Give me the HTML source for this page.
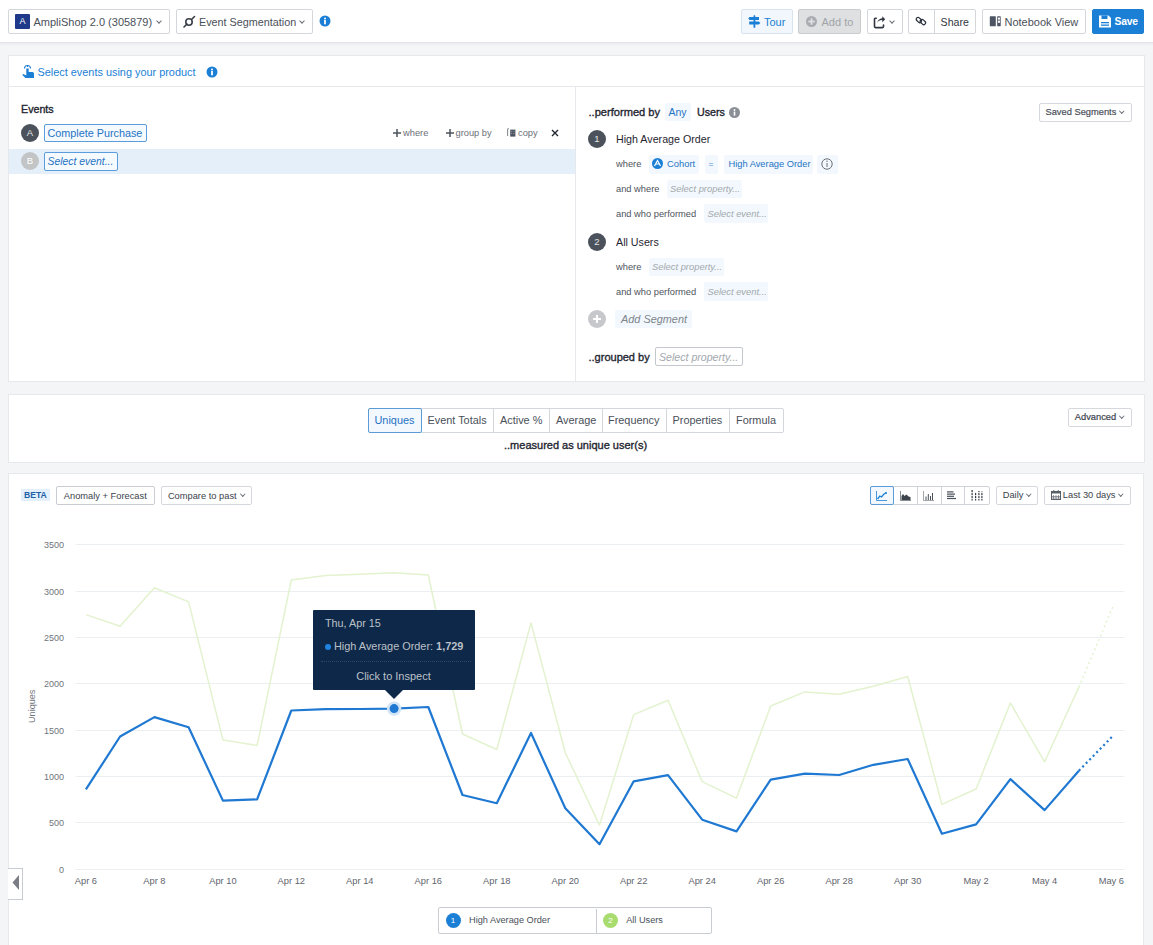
<!DOCTYPE html>
<html><head><meta charset="utf-8">
<style>
*{box-sizing:border-box;margin:0;padding:0}
html,body{width:1153px;height:945px;overflow:hidden}
body{background:#f4f5f7;font-family:"Liberation Sans",sans-serif;position:relative;color:#2f3641}
.a{position:absolute;white-space:nowrap}
.btn{position:absolute;border:1px solid #d3d6da;border-radius:2px;background:#fff}
.tb{font-size:11px;color:#4a5059;line-height:12px}
.panel{position:absolute;background:#fff;border:1px solid #e6e8eb}
.chev{position:absolute;width:4px;height:4px;border-right:1px solid #6a6f77;border-bottom:1px solid #6a6f77;transform:rotate(45deg)}
.sm{font-size:9.3px;color:#6b7079;line-height:11px}
.pill{position:absolute;background:#f2f8fd;border-radius:2px}
.ph{font-style:italic;color:#a3a8ae;font-size:9.4px;line-height:11px}
.num{position:absolute;border-radius:50%;background:#4c525c;color:#e3e5e8;font-size:9.5px;text-align:center}
</style></head><body>

<!-- TOP BAR -->
<div class="a" style="left:0;top:43px;width:1153px;height:3px;background:linear-gradient(#e9ebee,#f4f5f7)"></div>
<div class="a" style="left:0;top:0;width:1153px;height:43px;background:#fff;border-bottom:1px solid #e2e4e7"></div>

<div class="btn" style="left:8px;top:9px;width:162px;height:25px"></div>
<div class="a" style="left:15px;top:14px;width:15px;height:15px;background:#1f3a8a;border-radius:1px;color:#fff;font-size:9px;line-height:15px;text-align:center">A</div>
<div class="a tb" id="t_amp" style="left:33.5px;top:15.6px">AmpliShop 2.0 (305879)</div>
<div class="chev" style="left:157px;top:19px"></div>

<div class="btn" style="left:176px;top:9px;width:137px;height:25px"></div>
<svg class="a" style="left:183px;top:15px" width="13" height="13" viewBox="0 0 13 13"><circle cx="6" cy="7" r="3.2" fill="none" stroke="#3a4049" stroke-width="1.6"/><line x1="1" y1="12" x2="4" y2="9" stroke="#3a4049" stroke-width="1.6" stroke-linecap="round"/><line x1="9" y1="4" x2="11.5" y2="1.5" stroke="#3a4049" stroke-width="1.6" stroke-linecap="round"/></svg>
<div class="a tb" id="t_es" style="left:199px;top:15.6px;font-size:10.8px">Event Segmentation</div>
<div class="chev" style="left:300px;top:19px"></div>
<svg class="a" style="left:319px;top:15px" width="12" height="12" viewBox="0 0 12 12"><circle cx="6" cy="6" r="5.5" fill="#1b7fd6"/><rect x="5.1" y="5" width="1.8" height="4.3" fill="#fff"/><circle cx="6" cy="3.4" r="1" fill="#fff"/></svg>

<!-- right buttons -->
<div class="btn" style="left:741px;top:9px;width:52px;height:25px;background:#f1f7fd;border-color:#d7e3ee"></div>
<svg class="a" style="left:748px;top:15px" width="13" height="13" viewBox="0 0 13 13"><rect x="5.5" y="0.3" width="1.8" height="12.5" rx="0.6" fill="#1b7fd6"/><path d="M0.2 3.5L1.6 2.1H11V4.9H1.6Z" fill="#1b7fd6"/><path d="M1.2 6.5H10.8L12.3 8L10.8 9.5H1.2Z" fill="#1b7fd6"/></svg>
<div class="a tb" id="t_tour" style="left:764px;top:15.6px;color:#1b7fd6">Tour</div>

<div class="btn" style="left:798px;top:9px;width:63px;height:25px;background:#dfe0e2;border-color:#c9cbce"></div>
<svg class="a" style="left:806px;top:16px" width="11" height="11" viewBox="0 0 11 11"><circle cx="5.5" cy="5.5" r="5.5" fill="#a8abb0"/><rect x="4.6" y="2.3" width="1.8" height="6.4" fill="#dfe0e2"/><rect x="2.3" y="4.6" width="6.4" height="1.8" fill="#dfe0e2"/></svg>
<div class="a tb" id="t_add" style="left:821.5px;top:15.6px;color:#a0a4a9">Add to</div>

<div class="btn" style="left:866.5px;top:9px;width:36px;height:25px"></div>
<svg class="a" style="left:873px;top:15.5px" width="13" height="13" viewBox="0 0 13 13"><path d="M3.2 2.2H2.3Q1.5 2.2 1.5 3V10.6Q1.5 11.6 2.5 11.6H9.5Q10.5 11.6 10.5 10.6V9" fill="none" stroke="#2f3641" stroke-width="1.6" stroke-linecap="round"/><path d="M3.8 8C4.5 5.2 6.5 4.1 9.3 4.1V6.2L12.2 3.2L9.3 0.3V2.2C6.3 2.4 4.3 4.8 3.8 8Z" fill="#2f3641"/></svg>
<div class="chev" style="left:889.5px;top:19px"></div>

<div class="btn" style="left:908px;top:9px;width:68px;height:25px"></div>
<div class="a" style="left:934px;top:10px;width:1px;height:23px;background:#d3d6da"></div>
<svg class="a" style="left:915px;top:15px" width="12" height="12" viewBox="0 0 12 12"><rect x="0.9" y="3.2" width="6" height="3.6" rx="1.8" transform="rotate(45 3.9 5)" fill="none" stroke="#2f3641" stroke-width="1.3"/><rect x="4.9" y="5.2" width="6" height="3.6" rx="1.8" transform="rotate(45 7.9 7)" fill="none" stroke="#2f3641" stroke-width="1.3"/></svg>
<div class="a tb" id="t_share" style="left:940.6px;top:15.6px;color:#2f3641;font-size:10.6px">Share</div>

<div class="btn" style="left:982px;top:9px;width:104px;height:25px"></div>
<svg class="a" style="left:989px;top:15px" width="12" height="13" viewBox="0 0 12 13"><rect x="0.8" y="1.3" width="6" height="10" rx="0.5" fill="#4d5563"/><rect x="8.2" y="1.3" width="3.5" height="10" rx="0.5" fill="#4d5563"/><rect x="9" y="2.6" width="2" height="2" fill="#fff"/><rect x="9" y="5.6" width="2" height="2.2" fill="#fff"/></svg>
<div class="a tb" id="t_nb" style="left:1004.5px;top:15.6px">Notebook View</div>

<div class="btn" style="left:1092px;top:9px;width:52px;height:25px;background:#1b7fd6;border-color:#1b7fd6"></div>
<svg class="a" style="left:1099px;top:15px" width="12" height="13" viewBox="0 0 12 13"><path d="M0 0.5H9.5L12 3V12.5H0Z" fill="#fff"/><rect x="2.5" y="0.5" width="6" height="3.5" fill="#1b7fd6"/><rect x="2" y="7" width="8" height="1.3" fill="#1b7fd6"/><rect x="2" y="9.5" width="8" height="1.3" fill="#1b7fd6"/></svg>
<div class="a tb" id="t_save" style="left:1114.6px;top:15.6px;color:#fff;font-weight:bold;font-size:10.4px;letter-spacing:-0.3px">Save</div>

<!-- PANEL 1 -->
<div class="panel" style="left:8px;top:55px;width:1137px;height:327px"></div>
<div class="a" style="left:9px;top:86px;width:1135px;height:1px;background:#e6e8eb"></div>
<div class="a" style="left:575px;top:87px;width:1px;height:294px;background:#e6e8eb"></div>


<!-- panel1 header -->
<svg class="a" style="left:22px;top:64px" width="12" height="14" viewBox="0 0 12 14"><path d="M2.5 4.5A3 3 0 0 1 8.5 4.5" fill="none" stroke="#1b7fd6" stroke-width="1.1"/><path d="M5.5 1.5V3" stroke="#1b7fd6" stroke-width="1"/><path d="M4.3 4.5H6.7V8H10.5A1.5 1.5 0 0 1 12 9.5V14H3.5L0.3 11L1.3 10L4.3 11.5Z" fill="#1b7fd6"/></svg>
<div class="a" id="t_sel" style="left:37.5px;top:66px;font-size:10.9px;line-height:12px;color:#1b7fd6">Select events using your product</div>
<svg class="a" style="left:206px;top:66px" width="12" height="12" viewBox="0 0 12 12"><circle cx="6" cy="6" r="5.5" fill="#1b7fd6"/><rect x="5.1" y="5" width="1.8" height="4.3" fill="#fff"/><circle cx="6" cy="3.4" r="1" fill="#fff"/></svg>

<!-- events -->
<div class="a" id="t_events" style="left:21px;top:103px;font-size:10.7px;line-height:12px;color:#1f2631;-webkit-text-stroke:0.35px #1f2631">Events</div>
<div class="num" style="left:21px;top:124px;width:18px;height:18px;line-height:18px">A</div>
<div class="a" style="left:44px;top:124px;width:103px;height:18px;border:1px solid #5b9ddc;border-radius:2px;background:#f5faff"></div>
<div class="a" id="t_cp" style="left:47.5px;top:127px;font-size:10.8px;line-height:12px;color:#1f73c4">Complete Purchase</div>

<div class="a sm" id="t_where" style="left:403px;top:128px">where</div>
<svg class="a" style="left:393px;top:129px" width="8" height="8" viewBox="0 0 8 8"><path d="M4 0V8M0 4H8" stroke="#4e545c" stroke-width="1.5"/></svg>
<div class="a sm" id="t_gb" style="left:455.5px;top:128px">group by</div>
<svg class="a" style="left:445.5px;top:129px" width="8" height="8" viewBox="0 0 8 8"><path d="M4 0V8M0 4H8" stroke="#4e545c" stroke-width="1.5"/></svg>
<svg class="a" style="left:507px;top:128px" width="9" height="9" viewBox="0 0 9 9"><path d="M1.8 0.6Q0.6 0.6 0.6 1.8V8" fill="none" stroke="#8a8f96" stroke-width="1.1"/><rect x="3.2" y="1.6" width="5.2" height="7" fill="#4d5563"/><rect x="4.2" y="2.8" width="1" height="1" fill="#9aa0a8"/><rect x="6.4" y="2.8" width="1" height="1" fill="#9aa0a8"/><rect x="4.2" y="5" width="1" height="1" fill="#9aa0a8"/><rect x="6.4" y="5" width="1" height="1" fill="#9aa0a8"/></svg>
<div class="a sm" id="t_copy" style="left:518px;top:128px">copy</div>
<svg class="a" style="left:551px;top:129px" width="8" height="8" viewBox="0 0 8 8"><path d="M1 1L7 7M7 1L1 7" stroke="#1f2631" stroke-width="1.4"/></svg>

<div class="a" style="left:9px;top:149px;width:566px;height:25px;background:#e4eff9"></div>
<div class="num" style="left:21px;top:152px;width:18px;height:18px;line-height:18px;background:#c3c4c6;color:#fff">B</div>
<div class="a" style="left:44px;top:152px;width:74px;height:19px;border:1px solid #5b9ddc;border-radius:2px;background:#f5faff"></div>
<div class="a" id="t_se" style="left:47.5px;top:155.5px;font-size:10.4px;line-height:12px;color:#1f73c4;font-style:italic">Select event...</div>

<!-- right side: performed by -->
<div class="a" id="t_perf" style="left:588.5px;top:106px;font-size:11.1px;line-height:12px;color:#1f2631;-webkit-text-stroke:0.35px #1f2631">..performed by</div>
<div class="pill" style="left:665px;top:103px;width:26px;height:18px"></div>
<div class="a" id="t_any" style="left:668.5px;top:106px;font-size:10.5px;line-height:12px;color:#1f73c4">Any</div>
<div class="a" id="t_users" style="left:697px;top:106px;font-size:10.7px;line-height:12px;color:#1f2631;-webkit-text-stroke:0.35px #1f2631">Users</div>
<svg class="a" style="left:728.5px;top:106.5px" width="11" height="11" viewBox="0 0 11 11"><circle cx="5.5" cy="5.5" r="5.5" fill="#8a8f96"/><rect x="4.7" y="4.6" width="1.6" height="4" fill="#fff"/><circle cx="5.5" cy="3" r="0.95" fill="#fff"/></svg>

<div class="num" style="left:588px;top:130px;width:18px;height:18px;line-height:18px">1</div>
<div class="a" id="t_hao" style="left:616px;top:133px;font-size:10.7px;line-height:12px;color:#1f2631">High Average Order</div>
<div class="a sm" id="t_w1" style="left:616px;top:158.8px;color:#4e545c">where</div>
<div class="pill" style="left:648.5px;top:154.5px;width:50px;height:19px"></div>
<svg class="a" style="left:652px;top:158px" width="11" height="11" viewBox="0 0 11 11"><circle cx="5.5" cy="5.5" r="5.5" fill="#1b7fd6"/><path d="M2.5 8L5.5 2.5L8.5 8M3.7 6H7.3" fill="none" stroke="#fff" stroke-width="1.2"/></svg>
<div class="a" id="t_coh" style="left:667px;top:158.3px;font-size:9.4px;line-height:11px;color:#1f73c4">Cohort</div>
<div class="pill" style="left:705px;top:154.5px;width:13px;height:19px"></div>
<div class="a" style="left:708.5px;top:158.5px;font-size:8.5px;line-height:11px;color:#4f8fd0">=</div>
<div class="pill" style="left:724px;top:154.5px;width:89px;height:19px"></div>
<div class="a" id="t_hao2" style="left:728.5px;top:159px;font-size:9.3px;line-height:11px;color:#1f73c4">High Average Order</div>
<div class="pill" style="left:817px;top:154.5px;width:21px;height:19px"></div>
<svg class="a" style="left:821px;top:158px" width="12" height="12" viewBox="0 0 12 12"><circle cx="6" cy="6" r="5.2" fill="none" stroke="#6b7079" stroke-width="1"/><rect x="5.5" y="5" width="1" height="4" fill="#6b7079"/><circle cx="6" cy="3.3" r="0.7" fill="#6b7079"/></svg>

<div class="a sm" id="t_aw" style="left:616px;top:183.8px;color:#4e545c">and where</div>
<div class="pill" style="left:666.5px;top:179.5px;width:75px;height:18.5px"></div>
<div class="a ph" id="t_sp1" style="left:670px;top:183px">Select property...</div>
<div class="a sm" id="t_awp" style="left:616px;top:208.8px;color:#4e545c">and who performed</div>
<div class="pill" style="left:704px;top:204px;width:64px;height:18.5px"></div>
<div class="a ph" id="t_se1" style="left:707.5px;top:208px">Select event...</div>

<div class="num" style="left:588px;top:233px;width:18px;height:18px;line-height:18px">2</div>
<div class="a" id="t_au" style="left:616px;top:236px;font-size:10.7px;line-height:12px;color:#1f2631">All Users</div>
<div class="a sm" id="t_w2" style="left:616px;top:261.8px;color:#4e545c">where</div>
<div class="pill" style="left:648.5px;top:258px;width:75.5px;height:18px"></div>
<div class="a ph" id="t_sp2" style="left:652px;top:261px">Select property...</div>
<div class="a sm" id="t_awp2" style="left:616px;top:286.8px;color:#4e545c">and who performed</div>
<div class="pill" style="left:704px;top:282px;width:64px;height:18.5px"></div>
<div class="a ph" id="t_se2" style="left:707.5px;top:286px">Select event...</div>

<div class="a" style="left:588px;top:310px;width:18px;height:18px;border-radius:50%;background:#c6c8cc"></div>
<div class="a" style="left:593px;top:318.2px;width:8px;height:1.6px;background:#fff"></div>
<div class="a" style="left:596.2px;top:315px;width:1.6px;height:8px;background:#fff"></div>
<div class="pill" style="left:615px;top:309.5px;width:76.5px;height:18px"></div>
<div class="a" id="t_addseg" style="left:621px;top:312.5px;font-size:10.9px;line-height:12px;color:#80858c;font-style:italic">Add Segment</div>

<div class="a" id="t_gby" style="left:588.5px;top:351px;font-size:11px;line-height:12px;color:#1f2631;-webkit-text-stroke:0.35px #1f2631">..grouped by</div>
<div class="a" style="left:655px;top:347px;width:88px;height:18.5px;border:1px solid #c4c7cb;border-radius:2px"></div>
<div class="a" id="t_sp3" style="left:659px;top:350.5px;font-size:10.6px;line-height:12px;color:#a3a8ae;font-style:italic">Select property...</div>

<div class="btn" style="left:1038.5px;top:102.5px;width:93px;height:19px;border-color:#d5d8dc"></div>
<div class="a" id="t_ss" style="left:1045.5px;top:106.5px;font-size:9.3px;line-height:11px;color:#4a5059;-webkit-text-stroke:0.2px #4a5059">Saved Segments</div>
<div class="chev" style="left:1119.5px;top:109px;width:3.5px;height:3.5px"></div>


<!-- PANEL 2 -->
<div class="panel" style="left:8px;top:394px;width:1137px;height:69px"></div>
<div class="a" style="left:367.5px;top:407.5px;width:416px;height:25px;border:1px solid #d3d6da;border-radius:2px"></div>
<div class="a" style="left:367.5px;top:407.5px;width:54px;height:25px;border:1px solid #5a9bd8;border-radius:2px;background:#f2f8fd"></div>
<div class="a" style="left:493px;top:408.5px;width:1px;height:23px;background:#d3d6da"></div>
<div class="a" style="left:549px;top:408.5px;width:1px;height:23px;background:#d3d6da"></div>
<div class="a" style="left:601.5px;top:408.5px;width:1px;height:23px;background:#d3d6da"></div>
<div class="a" style="left:665.5px;top:408.5px;width:1px;height:23px;background:#d3d6da"></div>
<div class="a" style="left:729.3px;top:408.5px;width:1px;height:23px;background:#d3d6da"></div>
<div class="a" id="t_uniq" style="left:374.5px;top:414px;font-size:10.9px;line-height:12px;color:#1f73c4">Uniques</div>
<div class="a" id="t_et" style="left:427.5px;top:414px;font-size:10.9px;line-height:12px;color:#4a5059">Event Totals</div>
<div class="a" id="t_ap" style="left:500px;top:414px;font-size:10.9px;line-height:12px;color:#4a5059">Active %</div>
<div class="a" id="t_avg" style="left:556px;top:414px;font-size:10.9px;line-height:12px;color:#4a5059">Average</div>
<div class="a" id="t_freq" style="left:608px;top:414px;font-size:10.9px;line-height:12px;color:#4a5059">Frequency</div>
<div class="a" id="t_prop" style="left:672.5px;top:414px;font-size:10.9px;line-height:12px;color:#4a5059">Properties</div>
<div class="a" id="t_form" style="left:736px;top:414px;font-size:10.9px;line-height:12px;color:#4a5059">Formula</div>
<div class="a" id="t_meas" style="left:504px;top:438.5px;font-size:11px;line-height:12px;color:#1f2631;-webkit-text-stroke:0.35px #1f2631">..measured as unique user(s)</div>

<div class="btn" style="left:1068px;top:407.5px;width:63.5px;height:19px;border-color:#d5d8dc"></div>
<div class="a" id="t_adv" style="left:1074.8px;top:411.5px;font-size:9.3px;line-height:11px;color:#3c434c;-webkit-text-stroke:0.2px #3c434c">Advanced</div>
<div class="chev" style="left:1119.5px;top:414px;width:3.5px;height:3.5px"></div>

<!-- PANEL 3 -->
<div class="panel" style="left:8px;top:473px;width:1136px;height:480px"></div>
<div class="a" style="left:21px;top:489px;width:28.5px;height:12px;background:#e3effa"></div>
<div class="a" id="t_beta" style="left:24px;top:490px;font-size:8.6px;line-height:10px;font-weight:bold;color:#1e5fa8">BETA</div>
<div class="btn" style="left:56px;top:486px;width:99px;height:18.5px;border-color:#c9ccd0"></div>
<div class="a" id="t_anom" style="left:63.8px;top:490.5px;font-size:9.3px;line-height:11px;color:#3c434c">Anomaly + Forecast</div>
<div class="btn" style="left:161px;top:486px;width:91px;height:18.5px;border-color:#d5d8dc"></div>
<div class="a" id="t_cmp" style="left:167.9px;top:490.5px;font-size:9.3px;line-height:11px;color:#3c434c">Compare to past</div>
<div class="chev" style="left:240.5px;top:492px;width:3.5px;height:3.5px"></div>

<div class="btn" style="left:869.5px;top:486px;width:120px;height:18.5px;border-color:#d0d3d7"></div>
<div class="a" style="left:869.5px;top:486px;width:24.5px;height:18.5px;border:1px solid #5a9bd8;border-radius:2px;background:#f2f8fd"></div>
<div class="a" style="left:917px;top:487px;width:1px;height:16.5px;background:#d0d3d7"></div>
<div class="a" style="left:940.5px;top:487px;width:1px;height:16.5px;background:#d0d3d7"></div>
<div class="a" style="left:963.5px;top:487px;width:1px;height:16.5px;background:#d0d3d7"></div>
<svg class="a" style="left:875.5px;top:490.5px" width="11" height="10" viewBox="0 0 11 10"><path d="M0.5 0V9.5H11" fill="none" stroke="#1b7fd6" stroke-width="0.8"/><path d="M1.5 8L3.8 5L5.5 6L8 3L10 2" fill="none" stroke="#1b7fd6" stroke-width="1.3"/><circle cx="10" cy="2" r="1" fill="#1b7fd6"/></svg>
<svg class="a" style="left:899.5px;top:490.5px" width="11" height="10" viewBox="0 0 11 10"><path d="M0.5 0V9.5H11" fill="none" stroke="#6a7078" stroke-width="0.8"/><path d="M1.5 9V5L3 3L4.5 5L6.5 3.5L8.5 5.5L10.5 6V9Z" fill="#3c434c"/></svg>
<svg class="a" style="left:923px;top:490.5px" width="11" height="10" viewBox="0 0 11 10"><path d="M0.5 0V9.5H11" fill="none" stroke="#8a8f96" stroke-width="0.8"/><rect x="2.5" y="5.5" width="1" height="3.5" fill="#4a5059"/><rect x="4.8" y="3" width="1" height="6" fill="#4a5059"/><rect x="7" y="5" width="1" height="4" fill="#4a5059"/><rect x="9" y="2" width="1" height="7" fill="#4a5059"/></svg>
<svg class="a" style="left:947px;top:490.5px" width="10" height="9" viewBox="0 0 10 9"><rect x="0" y="0.3" width="6.5" height="1.2" fill="#4a5059"/><rect x="0" y="2.5" width="8" height="1.2" fill="#4a5059"/><rect x="0" y="4.7" width="7" height="1.2" fill="#4a5059"/><rect x="0" y="6.9" width="9" height="1.2" fill="#4a5059"/></svg>
<svg class="a" style="left:970.5px;top:490px" width="12" height="11" viewBox="0 0 12 11"><g fill="#2f3641"><rect x="0.5" y="0" width="1.2" height="10.5"/><rect x="4" y="2.5" width="1.2" height="8"/><rect x="7.3" y="1" width="1.2" height="9.5"/><rect x="10.3" y="1.5" width="1.2" height="9"/></g><g fill="#fff"><rect x="0" y="2.2" width="12" height="0.9"/><rect x="0" y="5.2" width="12" height="0.9"/><rect x="0" y="8.2" width="12" height="0.9"/></g></svg>
<div class="btn" style="left:995.5px;top:486px;width:42.5px;height:18.5px;border-color:#d5d8dc"></div>
<div class="a" id="t_daily" style="left:1002.7px;top:490px;font-size:9.3px;line-height:11px;color:#3c434c">Daily</div>
<div class="chev" style="left:1026.5px;top:492px;width:3.5px;height:3.5px"></div>
<div class="btn" style="left:1044px;top:486px;width:86.5px;height:18.5px;border-color:#d5d8dc"></div>
<svg class="a" style="left:1051px;top:490px" width="10" height="10" viewBox="0 0 10 10"><rect x="0.5" y="1.5" width="9" height="8" fill="none" stroke="#5a6069" stroke-width="1"/><rect x="0.5" y="1.5" width="9" height="2" fill="#5a6069"/><path d="M2.5 5V9M5 5V9M7.5 5V9M1 6.5H9M1 8H9" stroke="#5a6069" stroke-width="0.6"/><rect x="2.3" y="0" width="1" height="2" fill="#5a6069"/><rect x="6.7" y="0" width="1" height="2" fill="#5a6069"/></svg>
<div class="a" id="t_l30" style="left:1062.8px;top:490px;font-size:9.3px;line-height:11px;color:#3c434c">Last 30 days</div>
<div class="chev" style="left:1118.5px;top:492px;width:3.5px;height:3.5px"></div>

<!--CHART-->
<svg class="a" style="left:0;top:0" width="1153" height="945" viewBox="0 0 1153 945">
<line x1="75.5" y1="869.5" x2="1124.5" y2="869.5" stroke="#ebeff2" stroke-width="1"/>
<text x="64" y="872.6" text-anchor="end" font-size="9" fill="#6f747b" font-family="Liberation Sans">0</text>
<line x1="75.5" y1="822.5" x2="1124.5" y2="822.5" stroke="#ebeff2" stroke-width="1"/>
<text x="64" y="825.6" text-anchor="end" font-size="9" fill="#6f747b" font-family="Liberation Sans">500</text>
<line x1="75.5" y1="776.5" x2="1124.5" y2="776.5" stroke="#ebeff2" stroke-width="1"/>
<text x="64" y="779.6" text-anchor="end" font-size="9" fill="#6f747b" font-family="Liberation Sans">1000</text>
<line x1="75.5" y1="730.5" x2="1124.5" y2="730.5" stroke="#ebeff2" stroke-width="1"/>
<text x="64" y="733.6" text-anchor="end" font-size="9" fill="#6f747b" font-family="Liberation Sans">1500</text>
<line x1="75.5" y1="683.5" x2="1124.5" y2="683.5" stroke="#ebeff2" stroke-width="1"/>
<text x="64" y="686.6" text-anchor="end" font-size="9" fill="#6f747b" font-family="Liberation Sans">2000</text>
<line x1="75.5" y1="637.5" x2="1124.5" y2="637.5" stroke="#ebeff2" stroke-width="1"/>
<text x="64" y="640.6" text-anchor="end" font-size="9" fill="#6f747b" font-family="Liberation Sans">2500</text>
<line x1="75.5" y1="591.5" x2="1124.5" y2="591.5" stroke="#ebeff2" stroke-width="1"/>
<text x="64" y="594.6" text-anchor="end" font-size="9" fill="#6f747b" font-family="Liberation Sans">3000</text>
<line x1="75.5" y1="544.5" x2="1124.5" y2="544.5" stroke="#ebeff2" stroke-width="1"/>
<text x="64" y="547.6" text-anchor="end" font-size="9" fill="#6f747b" font-family="Liberation Sans">3500</text>
<text x="85.9" y="884.3" text-anchor="middle" font-size="9.3" fill="#5f656d" font-family="Liberation Sans">Apr 6</text>
<text x="154.4" y="884.3" text-anchor="middle" font-size="9.3" fill="#5f656d" font-family="Liberation Sans">Apr 8</text>
<text x="222.9" y="884.3" text-anchor="middle" font-size="9.3" fill="#5f656d" font-family="Liberation Sans">Apr 10</text>
<text x="291.3" y="884.3" text-anchor="middle" font-size="9.3" fill="#5f656d" font-family="Liberation Sans">Apr 12</text>
<text x="359.8" y="884.3" text-anchor="middle" font-size="9.3" fill="#5f656d" font-family="Liberation Sans">Apr 14</text>
<text x="428.3" y="884.3" text-anchor="middle" font-size="9.3" fill="#5f656d" font-family="Liberation Sans">Apr 16</text>
<text x="496.8" y="884.3" text-anchor="middle" font-size="9.3" fill="#5f656d" font-family="Liberation Sans">Apr 18</text>
<text x="565.3" y="884.3" text-anchor="middle" font-size="9.3" fill="#5f656d" font-family="Liberation Sans">Apr 20</text>
<text x="633.7" y="884.3" text-anchor="middle" font-size="9.3" fill="#5f656d" font-family="Liberation Sans">Apr 22</text>
<text x="702.2" y="884.3" text-anchor="middle" font-size="9.3" fill="#5f656d" font-family="Liberation Sans">Apr 24</text>
<text x="770.7" y="884.3" text-anchor="middle" font-size="9.3" fill="#5f656d" font-family="Liberation Sans">Apr 26</text>
<text x="839.2" y="884.3" text-anchor="middle" font-size="9.3" fill="#5f656d" font-family="Liberation Sans">Apr 28</text>
<text x="907.7" y="884.3" text-anchor="middle" font-size="9.3" fill="#5f656d" font-family="Liberation Sans">Apr 30</text>
<text x="976.1" y="884.3" text-anchor="middle" font-size="9.3" fill="#5f656d" font-family="Liberation Sans">May 2</text>
<text x="1044.6" y="884.3" text-anchor="middle" font-size="9.3" fill="#5f656d" font-family="Liberation Sans">May 4</text>
<text x="1124" y="884.3" text-anchor="end" font-size="9.3" fill="#5f656d" font-family="Liberation Sans">May 6</text>
<text transform="translate(35,706.3) rotate(-90)" text-anchor="middle" font-size="9.1" fill="#6f747b" font-family="Liberation Sans">Uniques</text>
<path d="M85.9 614.6 L120.1 626.2 L154.4 587.7 L188.6 601.9 L222.9 739.9 L257.1 745.4 L291.3 580.0 L325.6 575.6 L359.8 574.3 L394.1 572.8 L428.3 575.0 L462.5 734.0 L496.8 749.5 L531.0 622.9 L565.3 752.7 L599.5 825.1 L633.7 714.6 L668.0 700.3 L702.2 781.6 L736.5 798.1 L770.7 706.0 L804.9 691.9 L839.2 694.3 L873.4 686.3 L907.7 676.5 L941.9 804.4 L976.1 789.0 L1010.4 703.0 L1044.6 761.8 L1078.9 687.1" fill="none" stroke="#e3f2cf" stroke-width="1.5" stroke-linejoin="round"/>
<line x1="1078.9" y1="687.1" x2="1113.1" y2="606.1" stroke="#e3f2cf" stroke-width="1.5" stroke-dasharray="2 3"/>
<path d="M85.9 789.4 L120.1 736.5 L154.4 717.1 L188.6 727.3 L222.9 800.6 L257.1 799.4 L291.3 710.5 L325.6 709.2 L359.8 709.0 L394.1 708.6 L428.3 707.0 L462.5 795.0 L496.8 803.2 L531.0 733.0 L565.3 808.3 L599.5 844.3 L633.7 781.3 L668.0 775.2 L702.2 819.7 L736.5 831.4 L770.7 779.7 L804.9 773.7 L839.2 775.0 L873.4 764.8 L907.7 759.0 L941.9 833.7 L976.1 824.4 L1010.4 779.1 L1044.6 810.1 L1078.9 770.7" fill="none" stroke="#1f78d1" stroke-width="2.2" stroke-linejoin="round"/>
<line x1="1078.9" y1="770.7" x2="1113.1" y2="735.7" stroke="#1f78d1" stroke-width="2.2" stroke-dasharray="2 3"/>
<circle cx="394.1" cy="708.6" r="7.2" fill="#d2e5f7"/><circle cx="394.1" cy="708.6" r="4.5" fill="#1f78d1"/>
</svg>
<!--/CHART-->
<div class="a" style="left:312.5px;top:610px;width:162.5px;height:80px;background:#0e2849;border-radius:1px"></div>
<svg class="a" style="left:384px;top:689px" width="20" height="10" viewBox="0 0 20 10"><path d="M0 0H20L10 10Z" fill="#0e2849"/></svg>
<div class="a" id="t_thu" style="left:325px;top:617px;font-size:10.8px;line-height:13px;color:#bcc1c8">Thu, Apr 15</div>
<div class="a" style="left:324.5px;top:643.8px;width:6px;height:6px;border-radius:50%;background:#1f84e0"></div>
<div class="a" id="t_tt" style="left:334px;top:640px;font-size:10.9px;line-height:13px;color:#bcc1c8">High Average Order: <b>1,729</b></div>
<div class="a" style="left:320.5px;top:661px;width:150px;height:0;border-top:1px dotted #33496a"></div>
<div class="a" id="t_cti" style="left:356.2px;top:669.5px;font-size:11px;line-height:13px;color:#bcc1c8">Click to Inspect</div>

<!-- arrow box -->
<div class="a" style="left:8px;top:868px;width:15px;height:32px;background:#fff;border:1px solid #c9ccd0;border-left:none"></div>
<svg class="a" style="left:12px;top:875px" width="8" height="15" viewBox="0 0 8 15"><path d="M0.5 7.5L7 0V15Z" fill="#7a7e84"/></svg>

<!-- legend -->
<div class="a" style="left:438px;top:907px;width:274px;height:26.5px;border:1px solid #c9ccd0;border-radius:2px;background:#fff"></div>
<div class="a" style="left:596px;top:908.5px;width:1px;height:24px;background:#c9ccd0"></div>
<div class="a" style="left:445.5px;top:912.5px;width:15px;height:15px;border-radius:50%;background:#1b7fd6;color:#fff;font-size:8px;line-height:15px;text-align:center">1</div>
<div class="a" id="t_lg1" style="left:469px;top:915px;font-size:9.2px;line-height:11px;color:#4a5059">High Average Order</div>
<div class="a" style="left:603px;top:912.5px;width:15px;height:15px;border-radius:50%;background:#a9dc6f;color:#fff;font-size:8px;line-height:15px;text-align:center">2</div>
<div class="a" id="t_lg2" style="left:626.2px;top:915px;font-size:9.2px;line-height:11px;color:#4a5059">All Users</div>

</body></html>
